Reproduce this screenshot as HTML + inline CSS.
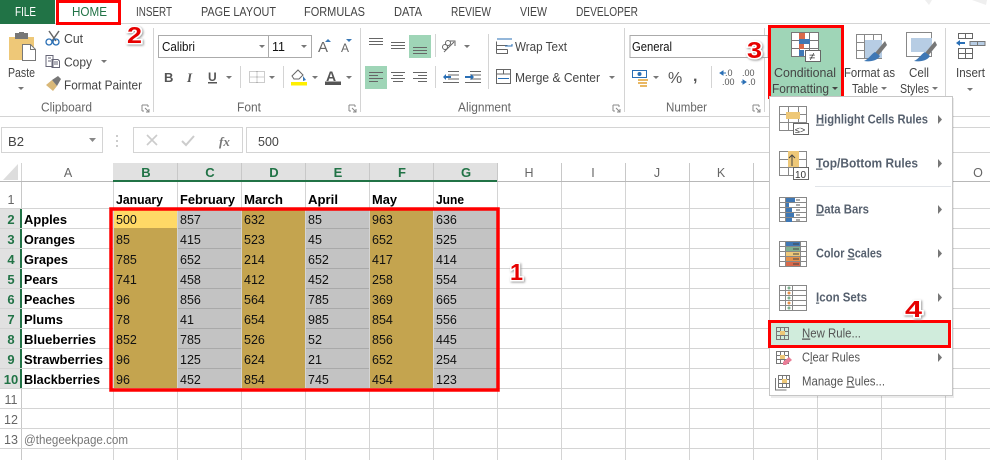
<!DOCTYPE html>
<html><head><meta charset="utf-8"><title>Conditional Formatting</title>
<style>
html,body{margin:0;padding:0;background:#fff}
svg{display:block}
text{font-family:"Liberation Sans",sans-serif;font-size:12.5px;fill:#444}
.c text{font-size:12.5px;fill:#111}
.n text{font-size:13px;font-weight:bold;fill:#000}
.rh text{font-size:13px;text-anchor:middle;font-weight:bold;fill:#217346}
.rn text{font-size:12.5px;text-anchor:middle;fill:#666}
.ch text{font-size:12.5px;text-anchor:middle;fill:#666}
.chs text{font-size:13px;text-anchor:middle;font-weight:bold;fill:#217346}
.m text{font-weight:bold;fill:#56606e}
.m2 text{fill:#555}
.u{text-decoration:underline}
.num{font-size:23px;font-weight:bold;fill:#e60000;stroke:#fff;stroke-width:3px;paint-order:stroke;filter:drop-shadow(1px 1px 1px #999)}
.l{fill:none;stroke:#666;stroke-width:1}
.ar{fill:#777}
</style></head>
<body>
<svg width="990" height="460" viewBox="0 0 990 460" xmlns="http://www.w3.org/2000/svg">
<rect width="990" height="460" fill="#fff"/>
<!-- corner marks -->
<path d="M925 0l4 5 3-5zM972 0l14 5 1-5z" fill="#efefef"/>

<!-- tabs -->
<rect x="0" y="23" width="990" height="1" fill="#d4d4d4"/>
<rect x="0" y="0" width="55" height="24" fill="#217346"/>
<text x="15" y="16" textLength="21" lengthAdjust="spacingAndGlyphs" style="fill:#fff">FILE</text>
<text x="72" y="16" textLength="35" lengthAdjust="spacingAndGlyphs" style="fill:#217346">HOME</text>
<text x="136" y="16" textLength="36" lengthAdjust="spacingAndGlyphs">INSERT</text>
<text x="201" y="16" textLength="75" lengthAdjust="spacingAndGlyphs">PAGE LAYOUT</text>
<text x="304" y="16" textLength="61" lengthAdjust="spacingAndGlyphs">FORMULAS</text>
<text x="394" y="16" textLength="28" lengthAdjust="spacingAndGlyphs">DATA</text>
<text x="451" y="16" textLength="40" lengthAdjust="spacingAndGlyphs">REVIEW</text>
<text x="520" y="16" textLength="27" lengthAdjust="spacingAndGlyphs">VIEW</text>
<text x="576" y="16" textLength="62" lengthAdjust="spacingAndGlyphs">DEVELOPER</text>
<rect x="57.5" y="1.5" width="62" height="22" fill="none" stroke="#f00" stroke-width="3"/>

<!-- ribbon structure -->
<rect x="0" y="116" width="990" height="1" fill="#d4d4d4"/>
<g fill="#d4d4d4">
<rect x="153" y="28" width="1" height="84"/><rect x="360" y="28" width="1" height="84"/>
<rect x="624" y="28" width="1" height="84"/><rect x="764" y="28" width="1" height="84"/>
<rect x="945" y="28" width="1" height="84"/>
<rect x="240" y="66" width="1" height="22"/><rect x="283" y="66" width="1" height="22"/>
<rect x="435" y="34" width="1" height="23"/><rect x="435" y="66" width="1" height="22"/>
<rect x="488" y="34" width="1" height="55"/><rect x="711" y="66" width="1" height="22"/>
</g>
<text x="41" y="111.500" textLength="51" lengthAdjust="spacingAndGlyphs" style="fill:#666">Clipboard</text>
<text x="237" y="111.500" textLength="24" lengthAdjust="spacingAndGlyphs" style="fill:#666">Font</text>
<text x="458" y="111.500" textLength="53" lengthAdjust="spacingAndGlyphs" style="fill:#666">Alignment</text>
<text x="666" y="111.500" textLength="41" lengthAdjust="spacingAndGlyphs" style="fill:#666">Number</text>
<g fill="none" stroke="#888"><path d="M142 105h6M142 105v6M142 111h2M148 105v2M145 108l4 4M149 109v3h-3"/>
<path d="M349 105h6M349 105v6M349 111h2M355 105v2M352 108l4 4M356 109v3h-3"/>
<path d="M613 105h6M613 105v6M613 111h2M619 105v2M616 108l4 4M620 109v3h-3"/>
<path d="M753 105h6M753 105v6M753 111h2M759 105v2M756 108l4 4M760 109v3h-3"/></g>

<!-- clipboard -->
<path d="M9 37h25v23H9z" fill="#eec878"/><rect x="15" y="33" width="13" height="6" fill="#777"/><rect x="19" y="32" width="5" height="3" fill="#777"/>
<path d="M22.500 44.500h8l5 5v11h-13z" fill="#fff" stroke="#777"/><path d="M30.500 44.500v5h5" fill="none" stroke="#777"/>
<text x="8" y="77" textLength="27" lengthAdjust="spacingAndGlyphs">Paste</text>
<path class="ar" d="M18 87h6l-3 3z"/>
<path d="M49 31l7 10M59 31l-7 10" stroke="#666" stroke-width="1.500" fill="none"/><circle cx="49" cy="42" r="3" fill="none" stroke="#2a6fb5" stroke-width="1.300"/><circle cx="56" cy="42" r="3" fill="none" stroke="#2a6fb5" stroke-width="1.300"/>
<text x="64" y="43" textLength="19" lengthAdjust="spacingAndGlyphs">Cut</text>
<path d="M46 55.500h7v11h-7zM52 59.500h6l1.500 1.500v6.500h-7.500z" fill="#fff" stroke="#667"/><path d="M48 58h3M48 61h3M54 62h4M54 64h4" stroke="#667"/>
<text x="64" y="66.500" textLength="28" lengthAdjust="spacingAndGlyphs">Copy</text>
<path class="ar" d="M101 60h6l-3 3z"/>
<path d="M46 85l6-5 5 6-4 5z" fill="#d9b878"/><path d="M52 80l6-4 3 3-4 7z" fill="#777"/>
<text x="64" y="89.500" textLength="78" lengthAdjust="spacingAndGlyphs">Format Painter</text>

<!-- font -->
<rect x="158.500" y="35.500" width="110" height="22" fill="#fff" stroke="#ababab"/>
<rect x="268.500" y="35.500" width="43" height="22" fill="#fff" stroke="#ababab"/>
<text x="162" y="51" textLength="33" lengthAdjust="spacingAndGlyphs" style="fill:#111;font-size:12.500px">Calibri</text>
<text x="272" y="51" style="fill:#111;font-size:12.500px">11</text>
<path class="ar" d="M259 45h6l-3 3zM301 45h6l-3 3z"/>
<text x="318" y="52" style="font-size:15px;fill:#666">A</text><path d="M325 42l3-3 3 3z" fill="#3a78b5"/>
<text x="341" y="52" style="font-size:12px;fill:#666">A</text><path d="M346 39h6l-3 3z" fill="#3a78b5"/>
<text x="164" y="82" style="font-weight:bold;font-size:13px;fill:#555">B</text>
<text x="187" y="82" style="font-weight:bold;font-style:italic;font-size:13px;fill:#555;font-family:'Liberation Serif',serif">I</text>
<text x="208" y="81" style="font-weight:bold;font-size:12px;fill:#555">U</text><rect x="208" y="82" width="9" height="1.500" fill="#555"/>
<path class="ar" d="M226 76h6l-3 3zM269 76h6l-3 3zM312 76h6l-3 3zM346 76h6l-3 3z"/>
<path d="M249.500 71.500h15v11h-15zM257 71.500v11M249.500 77h15" fill="none" stroke="#999" stroke-dasharray="1 1"/>
<path d="M292 76l6-6 5 5-4 4h-5z" fill="#fff" stroke="#666"/><path d="M303 76l3 4-3 1z" fill="#3a78b5"/>
<rect x="291" y="82" width="16" height="3.500" fill="#ffef00"/>
<text x="326" y="81" style="font-weight:bold;font-size:14px;fill:#555">A</text><rect x="325" y="81.500" width="16" height="3.500" fill="#555"/>

<!-- alignment -->
<rect x="409" y="35" width="22" height="23" fill="#9fd5b7"/>
<rect x="365" y="66" width="22" height="23" fill="#9fd5b7"/>
<g class="l">
<path d="M369 38.500h14M369 41.500h14M369 44.500h14"/>
<path d="M391 42.500h14M391 45.500h14M391 48.500h14"/>
<path d="M413 47.500h14M413 50.500h14M413 53.500h14"/>
<path d="M369 72.500h14M369 75.500h9M369 78.500h14M369 81.500h9"/>
<path d="M391 72.500h14M393 75.500h10M391 78.500h14M393 81.500h10"/>
<path d="M413 72.500h14M418 75.500h9M413 78.500h14M418 81.500h9"/>
<path d="M448 71.500h11M448 75h11M448 79h11M443 82.500h16"/>
<path d="M470 71.500h11M470 75h11M470 79h11M465 82.500h16"/>
<path d="M444 52l10-10M450 41h5v5"/><circle cx="448" cy="43" r="2.500"/><circle cx="445" cy="47" r="2.500"/>
</g>
<path d="M444 77h7M465 77h7" stroke="#2a6fb5" stroke-width="2"/><path d="M443 77l3-3v6zM474 77l-3-3v6z" fill="#2a6fb5"/>
<path class="ar" d="M464 45h6l-3 3zM609 76h6l-3 3z"/>
<path d="M496.500 45.500h11M496.500 49.500h11M496.500 53.500h11v-4M496.500 41.500v12" fill="none" stroke="#666"/><path d="M497 39h15M509 46h3v-2M505 46h4" fill="none" stroke="#2a6fb5"/>
<text x="515" y="51" textLength="52" lengthAdjust="spacingAndGlyphs">Wrap Text</text>
<rect x="496.500" y="69.500" width="14" height="14" fill="none" stroke="#666"/><path d="M496.500 74h14M503.500 69.500v4.500" stroke="#666"/><path d="M498 78.500h11" stroke="#2a6fb5"/>
<text x="515" y="82" textLength="85" lengthAdjust="spacingAndGlyphs">Merge &amp; Center</text>

<!-- number -->
<rect x="630" y="35.500" width="138" height="22" fill="#fff" stroke="#ababab"/>
<text x="632" y="51" textLength="40" lengthAdjust="spacingAndGlyphs" style="fill:#111;font-size:12.500px">General</text>
<rect x="632.500" y="70.500" width="14" height="7" fill="#fff" stroke="#2a6fb5"/><circle cx="639.500" cy="74" r="2" fill="#2a6fb5"/>
<path d="M638 80h10M638 83h9M640 86h7" stroke="#e9b864" stroke-width="2"/>
<path class="ar" d="M653 76h6l-3 3z"/>
<text x="668" y="83" style="font-size:16px;fill:#555">%</text>
<text x="693" y="81" style="font-size:16px;font-weight:bold;fill:#555">,</text>
<text x="725" y="76" style="font-size:9px;fill:#555">.0</text><text x="722" y="85" style="font-size:9px;fill:#555">.00</text><path d="M720 73l3-2v4zM722 73h4" fill="#2a6fb5" stroke="#2a6fb5"/>
<text x="742" y="76" style="font-size:9px;fill:#555">.00</text><text x="748" y="85" style="font-size:9px;fill:#555">.0</text><path d="M746 82l-3-2v4zM741 82h4" fill="#2a6fb5" stroke="#2a6fb5"/>

<!-- conditional formatting -->
<rect x="769.500" y="26.500" width="73" height="71" fill="#9fd5b7" stroke="#f00" stroke-width="3"/>
<path d="M791.500 32.500h27v24h-27z" fill="#fff" stroke="#777"/><path d="M791.500 40.500h27M791.500 48.500h27M799.500 32.500v24M809.500 32.500v24" stroke="#777" fill="none"/>
<rect x="799" y="33" width="6" height="7" fill="#d9694a"/><rect x="799" y="39" width="11" height="5" fill="#3f78b5"/><rect x="799" y="44" width="5" height="5" fill="#d9694a"/><rect x="799" y="50" width="5" height="6" fill="#3f78b5"/>
<rect x="805.500" y="50.500" width="15" height="11" fill="#fff" stroke="#666"/>
<text x="809" y="60" style="font-size:11px;fill:#333">≠</text>
<text x="774" y="77" textLength="62" lengthAdjust="spacingAndGlyphs">Conditional</text>
<text x="772" y="93" textLength="57" lengthAdjust="spacingAndGlyphs">Formatting</text>
<path d="M832 87h6l-3 3z" fill="#444"/>
<path d="M856.500 34.500h25v24h-25zM856.500 42.500h25M856.500 50.500h25M864.500 34.500v24M873.500 34.500v24" fill="#fff" stroke="#888"/>
<rect x="865" y="40" width="17" height="18" fill="#b7cde4"/>
<path d="M885 41l-10 12 3 3 9-11z" fill="#777"/><path d="M875 52c-4 2-6 7-11 9 6 1 13 0 16-5z" fill="#3f78b5"/>
<text x="844" y="77" textLength="51" lengthAdjust="spacingAndGlyphs">Format as</text>
<text x="852" y="93" textLength="26" lengthAdjust="spacingAndGlyphs">Table</text><path class="ar" d="M881 87h6l-3 3z"/>
<path d="M906.500 32.500h25v24h-25z" fill="#fff" stroke="#888"/><rect x="911" y="38" width="21" height="14" fill="#b7cde4"/>
<path d="M935 41l-10 12 3 3 9-11z" fill="#777"/><path d="M925 52c-4 2-6 7-11 9 6 1 13 0 16-5z" fill="#3f78b5"/>
<text x="909" y="77" textLength="20" lengthAdjust="spacingAndGlyphs">Cell</text>
<text x="900" y="93" textLength="29" lengthAdjust="spacingAndGlyphs">Styles</text><path class="ar" d="M932 87h6l-3 3z"/>
<path d="M958.500 33.500h14v5h-14zM965.500 33.500v5M958.500 48.500h14v10h-14zM965.500 48.500v10M958.500 53.500h14" fill="none" stroke="#666"/>
<path d="M970 41.500h15v4h-15zM977.500 41.500v4" fill="#b7cde4" stroke="#777"/><path d="M958 43h7" stroke="#2a6fb5" stroke-width="2"/><path d="M956 43l4-3v6z" fill="#2a6fb5"/>
<text x="956" y="77" textLength="29" lengthAdjust="spacingAndGlyphs">Insert</text><path class="ar" d="M967 88h6l-3 3z"/>

<!-- formula bar -->
<rect x="1.500" y="127.500" width="101" height="25" fill="#fff" stroke="#d4d4d4"/>
<text x="8" y="146" textLength="16" lengthAdjust="spacingAndGlyphs" style="font-size:12.500px">B2</text>
<path d="M89 138h7l-3.500 4z" fill="#888"/>
<path d="M117 135v2M117 140v2M117 145v2" stroke="#999"/>
<rect x="133.500" y="127.500" width="109" height="25" fill="#fff" stroke="#d4d4d4"/>
<rect x="246.500" y="127.500" width="744" height="25" fill="#fff" stroke="#d4d4d4"/>
<path d="M147 135l10 10M157 135l-10 10" stroke="#ccc" stroke-width="1.600"/>
<path d="M182 141l4 4 8-9" fill="none" stroke="#ccc" stroke-width="2"/>
<text x="219" y="146" style="font-family:'Liberation Serif',serif;font-style:italic;font-weight:bold;font-size:13px;fill:#777">fx</text>
<text x="258" y="146" style="font-size:12.500px">500</text>

<!-- sheet headers -->
<rect x="113" y="163" width="384" height="19" fill="#e1e1e1"/>
<rect x="21" y="163" width="1" height="19" fill="#d4d4d4"/>
<rect x="0" y="181" width="990" height="1" fill="#b8b8b8"/>
<rect x="113" y="180" width="384" height="2" fill="#217346"/>
<path d="M18 164v16H3z" fill="#ddd"/>
<g fill="#c8c8c8"><rect x="177" y="163" width="1" height="17"/><rect x="241" y="163" width="1" height="17"/><rect x="305" y="163" width="1" height="17"/><rect x="369" y="163" width="1" height="17"/><rect x="433" y="163" width="1" height="17"/><rect x="497" y="163" width="1" height="18"/><rect x="561" y="163" width="1" height="18"/><rect x="625" y="163" width="1" height="18"/><rect x="689" y="163" width="1" height="18"/><rect x="753" y="163" width="1" height="18"/></g>
<g class="ch"><text x="68" y="177">A</text><text x="529" y="177">H</text><text x="593" y="177">I</text><text x="657" y="177">J</text><text x="721" y="177">K</text><text x="978" y="177">O</text></g>
<g class="chs"><text x="146" y="177">B</text><text x="210" y="177">C</text><text x="274" y="177">D</text><text x="338" y="177">E</text><text x="402" y="177">F</text><text x="466" y="177">G</text></g>

<!-- row headers -->
<rect x="0" y="208" width="20" height="180" fill="#e1e1e1"/>
<rect x="20" y="208" width="2" height="180" fill="#217346"/>
<rect x="21" y="182" width="1" height="26" fill="#c8c8c8"/><rect x="21" y="388" width="1" height="72" fill="#c8c8c8"/>

<!-- grid -->
<g fill="#d4d4d4">
<rect x="0" y="208" width="990" height="1"/><rect x="0" y="228" width="990" height="1"/><rect x="0" y="248" width="990" height="1"/><rect x="0" y="268" width="990" height="1"/><rect x="0" y="288" width="990" height="1"/><rect x="0" y="308" width="990" height="1"/><rect x="0" y="328" width="990" height="1"/><rect x="0" y="348" width="990" height="1"/><rect x="0" y="368" width="990" height="1"/><rect x="0" y="388" width="990" height="1"/><rect x="0" y="408" width="990" height="1"/><rect x="0" y="428" width="990" height="1"/><rect x="0" y="448" width="990" height="1"/>
<rect x="113" y="182" width="1" height="278"/><rect x="177" y="182" width="1" height="278"/><rect x="241" y="182" width="1" height="278"/><rect x="305" y="182" width="1" height="278"/><rect x="369" y="182" width="1" height="278"/><rect x="433" y="182" width="1" height="278"/><rect x="497" y="182" width="1" height="278"/><rect x="561" y="182" width="1" height="278"/><rect x="625" y="182" width="1" height="278"/><rect x="689" y="182" width="1" height="278"/><rect x="753" y="182" width="1" height="278"/>
<rect x="817" y="182" width="1" height="278"/><rect x="881" y="182" width="1" height="278"/><rect x="945" y="162" width="1" height="298"/>
</g>

<!-- cell fills -->
<g fill="#c4a44f"><rect x="114" y="208" width="63" height="180"/><rect x="242" y="208" width="63" height="180"/><rect x="370" y="208" width="63" height="180"/></g>
<g fill="#c3c3c3"><rect x="178" y="208" width="63" height="180"/><rect x="306" y="208" width="63" height="180"/><rect x="434" y="208" width="63" height="180"/></g>
<rect x="114" y="209" width="63" height="19" fill="#ffd966"/>
<g fill="#a9a9a9"><rect x="178" y="228" width="63" height="1"/><rect x="178" y="248" width="63" height="1"/><rect x="178" y="268" width="63" height="1"/><rect x="178" y="288" width="63" height="1"/><rect x="178" y="308" width="63" height="1"/><rect x="178" y="328" width="63" height="1"/><rect x="178" y="348" width="63" height="1"/><rect x="178" y="368" width="63" height="1"/>
<rect x="306" y="228" width="63" height="1"/><rect x="306" y="248" width="63" height="1"/><rect x="306" y="268" width="63" height="1"/><rect x="306" y="288" width="63" height="1"/><rect x="306" y="308" width="63" height="1"/><rect x="306" y="328" width="63" height="1"/><rect x="306" y="348" width="63" height="1"/><rect x="306" y="368" width="63" height="1"/>
<rect x="434" y="228" width="63" height="1"/><rect x="434" y="248" width="63" height="1"/><rect x="434" y="268" width="63" height="1"/><rect x="434" y="288" width="63" height="1"/><rect x="434" y="308" width="63" height="1"/><rect x="434" y="328" width="63" height="1"/><rect x="434" y="348" width="63" height="1"/><rect x="434" y="368" width="63" height="1"/></g>

<!-- row numbers -->
<g class="rn"><text x="11" y="204">1</text><text x="11" y="404">11</text><text x="11" y="424">12</text><text x="11" y="444">13</text></g>
<g class="rh"><text x="11" y="224">2</text><text x="11" y="244">3</text><text x="11" y="264">4</text><text x="11" y="284">5</text><text x="11" y="304">6</text><text x="11" y="324">7</text><text x="11" y="344">8</text><text x="11" y="364">9</text><text x="11" y="384">10</text></g>

<!-- names -->
<g class="n">
<text x="24" y="224" textLength="43" lengthAdjust="spacingAndGlyphs">Apples</text>
<text x="24" y="244" textLength="51" lengthAdjust="spacingAndGlyphs">Oranges</text>
<text x="24" y="264" textLength="44" lengthAdjust="spacingAndGlyphs">Grapes</text>
<text x="24" y="284" textLength="34" lengthAdjust="spacingAndGlyphs">Pears</text>
<text x="24" y="304" textLength="51" lengthAdjust="spacingAndGlyphs">Peaches</text>
<text x="24" y="324" textLength="39" lengthAdjust="spacingAndGlyphs">Plums</text>
<text x="24" y="344" textLength="72" lengthAdjust="spacingAndGlyphs">Blueberries</text>
<text x="24" y="364" textLength="79" lengthAdjust="spacingAndGlyphs">Strawberries</text>
<text x="24" y="384" textLength="76" lengthAdjust="spacingAndGlyphs">Blackberries</text>
<text x="116" y="204" textLength="47" lengthAdjust="spacingAndGlyphs">January</text>
<text x="180" y="204" textLength="55" lengthAdjust="spacingAndGlyphs">February</text>
<text x="244" y="204" textLength="39" lengthAdjust="spacingAndGlyphs">March</text>
<text x="308" y="204" textLength="30" lengthAdjust="spacingAndGlyphs">April</text>
<text x="372" y="204" textLength="25" lengthAdjust="spacingAndGlyphs">May</text>
<text x="436" y="204" textLength="28" lengthAdjust="spacingAndGlyphs">June</text>
</g>

<!-- values -->
<g class="c">
<text x="116" y="224">500</text><text x="180" y="224">857</text><text x="244" y="224">632</text><text x="308" y="224">85</text><text x="372" y="224">963</text><text x="436" y="224">636</text>
<text x="116" y="244">85</text><text x="180" y="244">415</text><text x="244" y="244">523</text><text x="308" y="244">45</text><text x="372" y="244">652</text><text x="436" y="244">525</text>
<text x="116" y="264">785</text><text x="180" y="264">652</text><text x="244" y="264">214</text><text x="308" y="264">652</text><text x="372" y="264">417</text><text x="436" y="264">414</text>
<text x="116" y="284">741</text><text x="180" y="284">458</text><text x="244" y="284">412</text><text x="308" y="284">452</text><text x="372" y="284">258</text><text x="436" y="284">554</text>
<text x="116" y="304">96</text><text x="180" y="304">856</text><text x="244" y="304">564</text><text x="308" y="304">785</text><text x="372" y="304">369</text><text x="436" y="304">665</text>
<text x="116" y="324">78</text><text x="180" y="324">41</text><text x="244" y="324">654</text><text x="308" y="324">985</text><text x="372" y="324">854</text><text x="436" y="324">556</text>
<text x="116" y="344">852</text><text x="180" y="344">785</text><text x="244" y="344">526</text><text x="308" y="344">52</text><text x="372" y="344">856</text><text x="436" y="344">445</text>
<text x="116" y="364">96</text><text x="180" y="364">125</text><text x="244" y="364">624</text><text x="308" y="364">21</text><text x="372" y="364">652</text><text x="436" y="364">254</text>
<text x="116" y="384">96</text><text x="180" y="384">452</text><text x="244" y="384">854</text><text x="308" y="384">745</text><text x="372" y="384">454</text><text x="436" y="384">123</text>
</g>
<text x="24" y="444" textLength="104" lengthAdjust="spacingAndGlyphs" style="fill:#777;font-size:12.500px">@thegeekpage.com</text>

<!-- red box 1 -->
<rect x="111" y="209" width="387" height="181" fill="none" stroke="#f00" stroke-width="3.500"/>

<!-- menu -->
<rect x="771" y="98" width="183" height="300" fill="#000" opacity=".08"/>
<rect x="769.500" y="96.500" width="183" height="299" fill="#fff" stroke="#c6c6c6"/>
<rect x="815" y="186" width="136" height="1" fill="#e1e4e8"/>
<g fill="#777"><path d="M938 115l4 4.500-4 4.500zM938 159l4 4.500-4 4.500zM938 205l4 4.500-4 4.500zM938 249l4 4.500-4 4.500zM938 293l4 4.500-4 4.500zM938 353l4 4.500-4 4.500z"/></g>

<!-- menu icon: highlight -->
<g fill="none" stroke="#888">
<path d="M779.500 106.500h27v24h-27zM779.500 114.500h27M779.500 122.500h27M788.500 106.500v24M798.500 106.500v24"/></g>
<rect x="786" y="112" width="14" height="7" fill="#eec878"/>
<rect x="793.500" y="123.500" width="15" height="11" fill="#fff" stroke="#666"/>
<text x="795" y="133" style="font-size:9px;fill:#333">≤&gt;</text>
<!-- top/bottom -->
<g fill="none" stroke="#888"><path d="M779.500 151.500h27v24h-27zM779.500 159.500h27M779.500 167.500h27M788.500 151.500v24M798.500 151.500v24"/></g>
<rect x="788" y="151" width="11" height="16" fill="#eec878"/>
<path d="M792 166v-11M789 158l3-3 3 3" fill="none" stroke="#444"/>
<rect x="793.500" y="167.500" width="15" height="12" fill="#fff" stroke="#666"/>
<text x="795" y="178" style="font-size:10px;fill:#333">10</text>
<!-- data bars -->
<g fill="none" stroke="#888"><path d="M779.500 197.500h27v24h-27zM779.500 202.500h27M779.500 207.500h27M779.500 212.500h27M779.500 217.500h27M785.500 197.500v24"/></g>
<g fill="#3f78b5"><rect x="786" y="198" width="9" height="4"/><rect x="786" y="203" width="3" height="4"/><rect x="786" y="208" width="6" height="4"/><rect x="786" y="213" width="8" height="4"/><rect x="786" y="218" width="6" height="4"/></g>
<path d="M796 200h4M796 205h4M796 210h4M796 215h4M796 220h4" stroke="#555"/>
<!-- colour scales -->
<g><rect x="785" y="241" width="15" height="5" fill="#3f78b5"/><rect x="785" y="246" width="15" height="5" fill="#7fb08f"/><rect x="785" y="251" width="15" height="5" fill="#eec878"/><rect x="785" y="256" width="15" height="5" fill="#e6914a"/><rect x="785" y="261" width="15" height="5" fill="#d9694a"/></g>
<g fill="none" stroke="#888"><path d="M779.500 241.500h27v25h-27zM779.500 246.500h27M779.500 251.500h27M779.500 256.500h27M779.500 261.500h27M785.500 241.500v25M800.500 241.500v25"/></g>
<path d="M793 244h6M793 249h6M793 254h6M793 259h6M793 264h6" stroke="#444"/>
<!-- icon sets -->
<g fill="none" stroke="#888"><path d="M779.500 285.500h27v25h-27zM779.500 290.500h27M779.500 295.500h27M779.500 300.500h27M779.500 305.500h27M785.500 285.500v25M792.500 285.500v25"/></g>
<g><circle cx="789" cy="288" r="1.500" fill="#7fb08f"/><circle cx="789" cy="293" r="1.500" fill="#e6914a"/><circle cx="789" cy="298" r="1.500" fill="#7fb08f"/><circle cx="789" cy="303" r="1.500" fill="#e6914a"/><circle cx="789" cy="308" r="1.500" fill="#7fb08f"/></g>

<g class="m">
<text x="816" y="123.500" textLength="112" lengthAdjust="spacingAndGlyphs"><tspan class="u">H</tspan>ighlight Cells Rules</text>
<text x="816" y="167.500" textLength="102" lengthAdjust="spacingAndGlyphs"><tspan class="u">T</tspan>op/Bottom Rules</text>
<text x="816" y="213.500" textLength="53" lengthAdjust="spacingAndGlyphs"><tspan class="u">D</tspan>ata Bars</text>
<text x="816" y="257.500" textLength="66" lengthAdjust="spacingAndGlyphs">Color <tspan class="u">S</tspan>cales</text>
<text x="816" y="301.500" textLength="51" lengthAdjust="spacingAndGlyphs"><tspan class="u">I</tspan>con Sets</text>
</g>

<!-- new rule -->
<rect x="769.500" y="321.500" width="180" height="25" fill="#d0ecdc" stroke="#f00" stroke-width="3"/>
<g fill="none" stroke="#777"><path d="M776.500 327.500h12v12h-12zM776.500 331.500h12M776.500 335.500h12M780.500 327.500v12M784.500 327.500v12"/>
<path d="M776.500 351.500h12v12h-12zM776.500 355.500h12M776.500 359.500h12M780.500 351.500v12M784.500 351.500v12"/>
<path d="M778.500 375.500h11v12h-11zM778.500 379.500h11M778.500 383.500h11M782.500 375.500v12M786.500 375.500v12M775.500 378v12h11"/></g>
<rect x="780" y="331" width="5" height="4" fill="#eec878"/><rect x="780" y="355" width="5" height="4" fill="#eec878"/><rect x="782" y="379" width="5" height="4" fill="#eec878"/>
<path d="M783 362l6-5 3 3-6 5h-3z" fill="#e87d96"/>
<g class="m2">
<text x="802" y="337.500" textLength="59" lengthAdjust="spacingAndGlyphs"><tspan class="u">N</tspan>ew Rule...</text>
<text x="802" y="361.500" textLength="58" lengthAdjust="spacingAndGlyphs">C<tspan class="u">l</tspan>ear Rules</text>
<text x="802" y="385.500" textLength="83" lengthAdjust="spacingAndGlyphs">Manage <tspan class="u">R</tspan>ules...</text>
</g>

<!-- annotation numbers -->
<text class="num" x="127" y="43" textLength="15" lengthAdjust="spacingAndGlyphs">2</text>
<text class="num" x="747" y="58" textLength="15" lengthAdjust="spacingAndGlyphs">3</text>
<text class="num" x="510" y="280" textLength="13" lengthAdjust="spacingAndGlyphs">1</text>
<text class="num" x="905" y="317" textLength="17" lengthAdjust="spacingAndGlyphs">4</text>
</svg>
</body></html>
